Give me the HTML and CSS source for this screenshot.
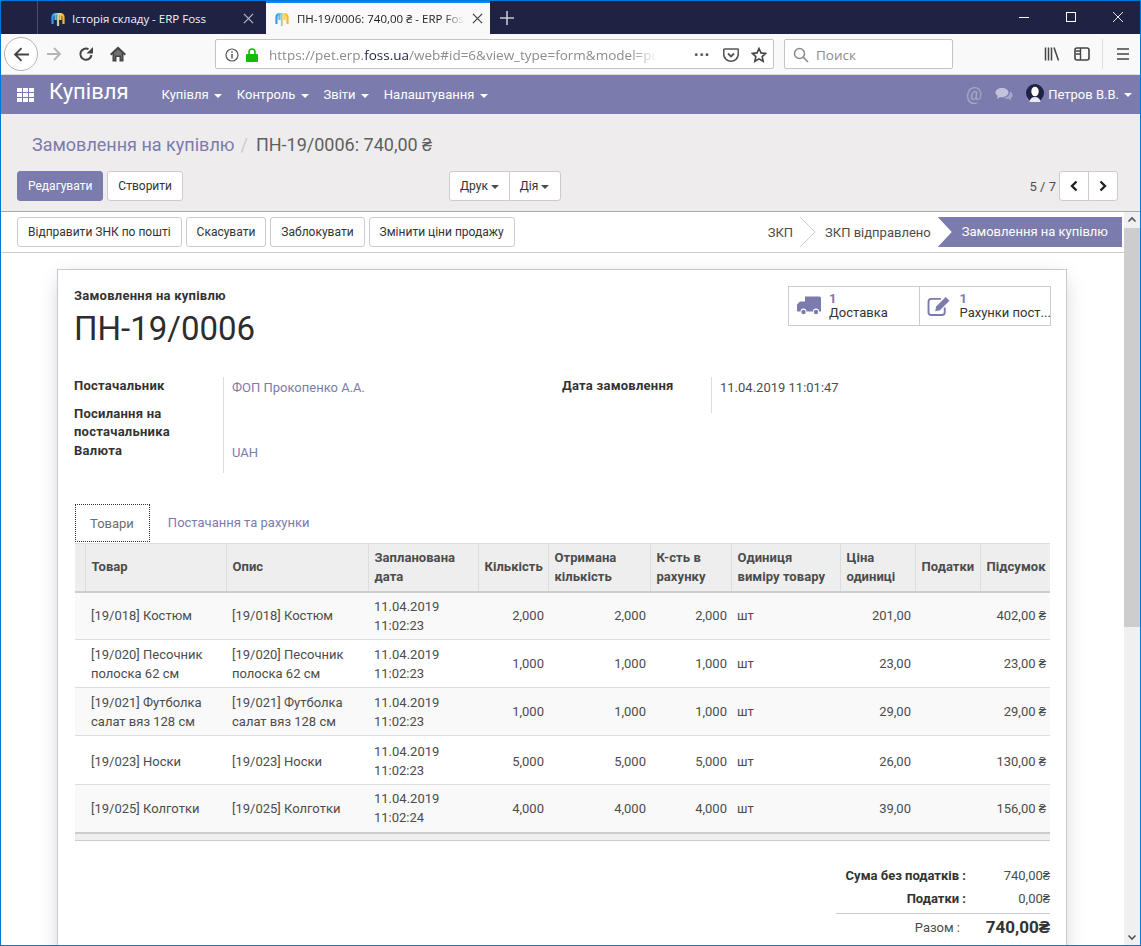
FILE: index.html
```html
<!DOCTYPE html>
<html lang="uk">
<head>
<meta charset="utf-8">
<title>ПН-19/0006: 740,00 ₴ - ERP Foss</title>
<link rel="stylesheet" href="styles.css">
</head>
<body>
<svg class="defs" width="0" height="0"><defs><linearGradient id="fav" x1="0" x2="1" y1="0" y2="0"><stop offset="0" stop-color="#2f9cf0"/><stop offset=".45" stop-color="#7fd0e8"/><stop offset=".6" stop-color="#f7e05a"/><stop offset="1" stop-color="#f5b52e"/></linearGradient></defs></svg>
<div class="window">
  <div class="tabbar">
    <div class="tab">
      <svg class="favicon" viewBox="0 0 16 16"><path d="M2.500 13V6.500Q2.500 3 5.500 3H10.500Q13.500 3 13.500 6.500V13M8 4V15M5.500 4V9M10.500 4V9" fill="none" stroke="url(#fav)" stroke-width="2.200"/></svg>
      <span class="tab-title">Історія складу - ERP Foss</span>
      <svg class="tab-close" viewBox="0 0 12 12"><path d="M1 1l10 10M11 1L1 11" stroke="#b4b6c2" stroke-width="1.400"/></svg>
    </div>
    <div class="tab tab-active">
      <svg class="favicon" viewBox="0 0 16 16"><path d="M2.500 13V6.500Q2.500 3 5.500 3H10.500Q13.500 3 13.500 6.500V13M8 4V15M5.500 4V9M10.500 4V9" fill="none" stroke="url(#fav)" stroke-width="2.200"/></svg>
      <span class="tab-title tab-title-fade">ПН-19/0006: 740,00 ₴ - ERP Fos</span>
      <svg class="tab-close" viewBox="0 0 12 12"><path d="M1 1l10 10M11 1L1 11" stroke="#444" stroke-width="1.400"/></svg>
    </div>
    <svg class="newtab" viewBox="0 0 14 14"><path d="M7 0v14M0 7h14" stroke="#c8c9d2" stroke-width="1.600"/></svg>
    <div class="winctrls">
      <svg viewBox="0 0 12 12"><path d="M1 6.500h10" stroke="#fff"/></svg>
      <svg viewBox="0 0 12 12"><rect x="1.500" y="1.500" width="9" height="9" fill="none" stroke="#fff"/></svg>
      <svg viewBox="0 0 12 12"><path d="M1 1l10 10M11 1L1 11" stroke="#fff" stroke-width=".9"/></svg>
    </div>
  </div>

  <div class="toolbar">
    <div class="backbtn"><svg viewBox="0 0 16 16"><path d="M15 8H2M8 2L2 8l6 6" fill="none" stroke="#444" stroke-width="1.800"/></svg></div>
    <svg class="tool fwd" viewBox="0 0 16 16"><path d="M1 8h13M8 2l6 6-6 6" fill="none" stroke="#b5b5b5" stroke-width="1.800"/></svg>
    <svg class="tool reload" viewBox="0 0 16 16"><path d="M13.500 9A5.600 5.600 0 1 1 10.500 3.200" fill="none" stroke="#444" stroke-width="2"/><path d="M15 1v6.500H8.500z" fill="#444"/></svg>
    <svg class="tool home" viewBox="0 0 16 16"><path d="M8 .5L0 8l1.300 1.400L2.500 8.300V15.500h4v-4.500h3v4.500h4V8.300l1.200 1.100L16 8z" fill="#444"/><path d="M8 3.200L4.200 6.800v7h.8v-4.300h6v4.300h.8v-7z" fill="#f9f9fa" opacity=".25"/></svg>
    <div class="urlbar">
      <svg class="url-info" viewBox="0 0 14 14"><circle cx="7" cy="7" r="6" fill="none" stroke="#555" stroke-width="1.200"/><path d="M7 6v4.500M7 3.200v1.500" stroke="#555" stroke-width="1.500"/></svg>
      <svg class="url-lock" viewBox="0 0 12 14"><path d="M3 6V4a3 3 0 0 1 6 0v2" fill="none" stroke="#12bc00" stroke-width="1.600"/><rect y="6" width="12" height="8" rx="1" fill="#12bc00"/></svg>
      <span class="url-text">https://pet.erp.<b>foss.ua</b>/web#id=6&amp;view_type=form&amp;model=pur</span>
      <span class="url-dots">•••</span>
      <svg class="url-ico url-pocket" viewBox="0 0 16 16"><path d="M1.500 2h13a.8.8 0 0 1 .8.8V7a7.300 7.300 0 0 1-14.600 0V2.800A.8.8 0 0 1 1.500 2z" fill="none" stroke="#555" stroke-width="1.600"/><path d="M5 6.500l3 3 3-3" fill="none" stroke="#555" stroke-width="1.800"/></svg>
      <svg class="url-ico url-star" viewBox="0 0 16 16"><path d="M8 1.500l2 4.400 4.700.5-3.500 3.200 1 4.700L8 11.900l-4.200 2.400 1-4.700L1.300 6.400 6 5.900z" fill="none" stroke="#444" stroke-width="1.600"/></svg>
    </div>
    <div class="searchbar">
      <svg viewBox="0 0 16 16"><circle cx="6.500" cy="6.500" r="5" fill="none" stroke="#8a8a8a" stroke-width="1.500"/><path d="M10 10l5 5" stroke="#8a8a8a" stroke-width="1.600"/></svg>
      <span>Поиск</span>
    </div>
    <div class="tools-right">
      <svg class="tool" viewBox="0 0 16 16"><path d="M1.500 1.500v13M4.500 1.500v13M7.500 1.500v13M10 1.500l4.500 13" fill="none" stroke="#444" stroke-width="1.500"/></svg>
      <svg class="tool" viewBox="0 0 16 16"><rect x="1" y="2" width="14" height="12" rx="2" fill="none" stroke="#444" stroke-width="1.600"/><path d="M6.500 2v12M2 5h4M2 8h4" stroke="#444" stroke-width="1.400"/></svg>
      <span class="tool-sep"></span>
      <svg class="tool" viewBox="0 0 16 16"><path d="M2 3h12M2 8h12M2 13h12" stroke="#444" stroke-width="1.700"/></svg>
    </div>
  </div>

  <nav class="navbar">
    <svg class="apps" viewBox="0 0 17 14"><g fill="#fff"><rect width="5" height="4"/><rect x="6" width="5" height="4"/><rect x="12" width="5" height="4"/><rect y="5" width="5" height="4"/><rect x="6" y="5" width="5" height="4"/><rect x="12" y="5" width="5" height="4"/><rect y="10" width="5" height="4"/><rect x="6" y="10" width="5" height="4"/><rect x="12" y="10" width="5" height="4"/></g></svg>
    <span class="brand">Купівля</span>
    <ul class="menu">
      <li>Купівля <i class="caret"></i></li>
      <li>Контроль <i class="caret"></i></li>
      <li>Звіти <i class="caret"></i></li>
      <li>Налаштування <i class="caret"></i></li>
    </ul>
    <div class="nav-right">
      <span class="nav-at">@</span>
      <svg class="nav-chat" viewBox="0 0 18 15"><path d="M7 1c3.600 0 6.500 2 6.500 4.600S10.600 10.200 7 10.200c-.7 0-1.300-.1-2-.2L2 12l.7-3C1.300 8.100.5 7 .5 5.600.5 3 3.400 1 7 1z" fill="#c3c2dc"/><path d="M15 4.500c1.600.8 2.600 2 2.600 3.500 0 1.200-.7 2.300-1.900 3l.5 2.600-2.800-1.800c-1.900.2-3.700-.3-4.900-1.200 3.600 0 6.800-2.400 6.500-6.100z" fill="#a9a8cb"/></svg>
      <svg class="nav-avatar" viewBox="0 0 18 18"><circle cx="9" cy="9" r="9" fill="#1e2343"/><ellipse cx="9" cy="7.500" rx="3.700" ry="4.800" fill="#fff"/><path d="M3.500 18c.5-3.500 2.500-5 5.500-5s5 1.500 5.500 5z" fill="#e8e8ee"/></svg>
      <span class="nav-user">Петров В.В.</span>
      <i class="caret"></i>
    </div>
  </nav>

  <section class="cpanel">
    <div class="breadcrumb">
      <a>Замовлення на купівлю</a><span class="bc-sep">/</span><span class="bc-cur">ПН-19/0006: 740,00 ₴</span>
    </div>
    <div class="cp-row">
      <div class="cp-left">
        <button class="btn btn-primary">Редагувати</button>
        <button class="btn">Створити</button>
      </div>
      <div class="btn-group cp-mid">
        <button class="btn">Друк <i class="caret caret-dark"></i></button>
        <button class="btn">Дія <i class="caret caret-dark"></i></button>
      </div>
      <div class="cp-right">
        <span class="pager">5 / 7</span>
        <div class="btn-group">
          <button class="btn btn-pg"><svg viewBox="0 0 10 12"><path d="M7.500 1.500L3 6l4.500 4.500" fill="none" stroke="#222" stroke-width="2.400"/></svg></button>
          <button class="btn btn-pg"><svg viewBox="0 0 10 12"><path d="M2.500 1.500L7 6l-4.500 4.500" fill="none" stroke="#222" stroke-width="2.400"/></svg></button>
        </div>
      </div>
    </div>
  </section>

  <div class="content">
    <main class="main">
      <div class="statusbar">
        <div class="st-buttons">
          <button class="btn">Відправити ЗНК по пошті</button>
          <button class="btn">Скасувати</button>
          <button class="btn">Заблокувати</button>
          <button class="btn">Змінити ціни продажу</button>
        </div>
        <div class="st-steps">
          <span class="step">ЗКП</span>
          <svg class="step-chev" viewBox="0 0 15 30"><path d="M0 0l15 15L0 30" fill="none" stroke="#ccc"/></svg>
          <span class="step step-2">ЗКП відправлено</span>
          <span class="step step-active">Замовлення на купівлю</span>
        </div>
      </div>

      <div class="sheet">
        <div class="sheet-head">
          <div>
            <div class="doc-label">Замовлення на купівлю</div>
            <h1 class="doc-title">ПН-19/0006</h1>
          </div>
          <div class="statbox">
            <div class="stat">
              <svg class="stat-ico" viewBox="0 0 24 19"><path d="M8 0h14.500a1.500 1.500 0 0 1 1.500 1.500V15h-2a3 3 0 0 0-6 0H9.500a3 3 0 0 0-6 0H1a1 1 0 0 1-1-1V8l3-3h5z" fill="#7c7bad"/><circle cx="6.500" cy="15.500" r="2.200" fill="#7c7bad"/><circle cx="19" cy="15.500" r="2.200" fill="#7c7bad"/></svg>
              <div><b>1</b><span>Доставка</span></div>
            </div>
            <div class="stat">
              <svg class="stat-ico" viewBox="0 0 24 21"><path d="M18 12v5a3 3 0 0 1-3 3H4a3 3 0 0 1-3-3V6a3 3 0 0 1 3-3h10" fill="none" stroke="#7c7bad" stroke-width="2"/><path d="M19 1l4 4-10 10-5 1 1-5z" fill="#7c7bad"/></svg>
              <div><b>1</b><span>Рахунки пост...</span></div>
            </div>
          </div>
        </div>

        <div class="groups">
          <div class="group group-left">
            <div class="g-label g-r1">Постачальник</div>
            <div class="g-value g-r1"><a>ФОП Прокопенко А.А.</a></div>
            <div class="g-label g-r2">Посилання на постачальника</div>
            <div class="g-value g-r2"></div>
            <div class="g-label g-r3">Валюта</div>
            <div class="g-value g-r3"><a>UAH</a></div>
          </div>
          <div class="group group-right">
            <div class="g-label g-r4">Дата замовлення</div>
            <div class="g-value g-r4">11.04.2019 11:01:47</div>
          </div>
        </div>

        <div class="nb-tabs">
          <span class="nb-tab nb-active">Товари</span>
          <span class="nb-tab">Постачання та рахунки</span>
        </div>

        <table class="lines">
          <colgroup>
            <col class="c0"><col class="c1"><col class="c2"><col class="c3"><col class="c4"><col class="c5"><col class="c6"><col class="c7"><col class="c8"><col class="c9"><col class="c10">
          </colgroup>
          <thead>
            <tr><th></th><th>Товар</th><th>Опис</th><th>Запланована дата</th><th>Кількість</th><th>Отримана кількість</th><th>К-сть в рахунку</th><th>Одиниця виміру товару</th><th>Ціна одиниці</th><th>Податки</th><th>Підсумок</th></tr>
          </thead>
          <tbody>
            <tr><td></td><td>[19/018] Костюм</td><td>[19/018] Костюм</td><td>11.04.2019 11:02:23</td><td class="num">2,000</td><td class="num">2,000</td><td class="num">2,000</td><td>шт</td><td class="num">201,00</td><td></td><td class="num">402,00 ₴</td></tr>
            <tr><td></td><td>[19/020] Песочник полоска 62 см</td><td>[19/020] Песочник полоска 62 см</td><td>11.04.2019 11:02:23</td><td class="num">1,000</td><td class="num">1,000</td><td class="num">1,000</td><td>шт</td><td class="num">23,00</td><td></td><td class="num">23,00 ₴</td></tr>
            <tr><td></td><td>[19/021] Футболка салат вяз 128 см</td><td>[19/021] Футболка салат вяз 128 см</td><td>11.04.2019 11:02:23</td><td class="num">1,000</td><td class="num">1,000</td><td class="num">1,000</td><td>шт</td><td class="num">29,00</td><td></td><td class="num">29,00 ₴</td></tr>
            <tr class="row-tall"><td></td><td>[19/023] Носки</td><td>[19/023] Носки</td><td>11.04.2019 11:02:23</td><td class="num">5,000</td><td class="num">5,000</td><td class="num">5,000</td><td>шт</td><td class="num">26,00</td><td></td><td class="num">130,00 ₴</td></tr>
            <tr><td></td><td>[19/025] Колготки</td><td>[19/025] Колготки</td><td>11.04.2019 11:02:24</td><td class="num">4,000</td><td class="num">4,000</td><td class="num">4,000</td><td>шт</td><td class="num">39,00</td><td></td><td class="num">156,00 ₴</td></tr>
          </tbody>
          <tfoot>
            <tr><td colspan="11"></td></tr>
          </tfoot>
        </table>

        <div class="totals">
          <div class="t-label">Сума без податків :</div><div class="t-value">740,00₴</div>
          <div class="t-label">Податки :</div><div class="t-value">0,00₴</div>
          <div class="t-label t-grand">Разом :</div><div class="t-value t-grand-val">740,00₴</div>
        </div>
      </div>
    </main>
    <div class="scrollbar">
      <svg class="sb-arrow" viewBox="0 0 16 16"><path d="M4.500 9.500L8 6l3.500 3.500" fill="none" stroke="#555" stroke-width="1.600"/></svg>
      <div class="sb-thumb"></div>
      <div class="sb-track"></div>
      <svg class="sb-arrow" viewBox="0 0 16 16"><path d="M4.500 6.500L8 10l3.500-3.500" fill="none" stroke="#555" stroke-width="1.600"/></svg>
    </div>
  </div>
</div>
</body>
</html>
```
FILE: styles.css
```css
* { box-sizing: border-box; }
html, body { margin: 0; padding: 0; height: 100%; overflow: hidden; }
body { font-family: Roboto, "Liberation Sans", sans-serif; font-size: 13px; color: #4c4c4c; background: #fff; }
svg { display: block; flex: none; }
.defs { position: absolute; }

.window { width: 1141px; height: 946px; border: 1px solid #0078d7; display: flex; flex-direction: column; overflow: hidden; }

/* browser tabs */
.tabbar { height: 33px; flex: none; background: #1e2343; display: flex; align-items: stretch; padding-left: 36px; font-family: "Open Sans", "Noto Sans", sans-serif; font-size: 11.500px; }
.tab { width: 229px; display: flex; align-items: center; padding: 2px 12px 0 12px; color: #f2f2f5; border-left: 1px solid #4a4e68; }
.tab-active { width: 224px; margin-left: 0; background: #f9f9fa; color: #222; border-left: 0; border-top: 2px solid #0a84ff; padding: 0 12px 0 8px; }
.favicon { width: 16px; height: 16px; }
.tab-title { margin-left: 6px; flex: 1; white-space: nowrap; }
.tab-active .tab-title { margin-left: 7px; }
.tab-title-fade { -webkit-mask-image: linear-gradient(to right, #000 88%, transparent 100%); mask-image: linear-gradient(to right, #000 88%, transparent 100%); }
.tab-close { width: 11px; height: 11px; margin-left: 8px; }
.newtab { width: 14px; height: 14px; margin: 10px 0 0 10px; }
.winctrls { margin-left: auto; display: flex; gap: 35px; padding: 10px 16px 0 0; }
.winctrls svg { width: 12px; height: 12px; }

/* browser toolbar */
.toolbar { height: 41px; flex: none; background: #f9f9fa; border-bottom: 1px solid #ddd; display: flex; align-items: center; padding-left: 3px; }
.backbtn { width: 34px; height: 34px; border: 1px solid #b5b5b5; border-radius: 50%; background: #fff; display: flex; align-items: center; justify-content: center; }
.backbtn svg { width: 17px; height: 17px; }
.tool { width: 16px; height: 16px; }
.fwd { margin-left: 8px; }
.reload { margin-left: 16px; }
.home { margin-left: 16px; }
.urlbar { width: 559px; height: 30px; margin-left: 89px; background: #fff; border: 1px solid #c4c4c4; border-radius: 2px; display: flex; align-items: center; padding: 1px 6px 0 9px; }
.url-info { width: 14px; height: 14px; }
.url-lock { width: 12px; height: 14px; margin-left: 7px; }
.url-text { margin-left: 11px; width: 389px; flex: none; white-space: nowrap; font-family: "Open Sans", "Noto Sans", sans-serif; font-size: 13.500px; color: #8c8c8c; -webkit-mask-image: linear-gradient(to right, #000 93%, transparent 100%); mask-image: linear-gradient(to right, #000 93%, transparent 100%); }
.url-text b { font-weight: 400; color: #1e2343; }
.url-dots { margin-left: 36px; font-size: 13px; letter-spacing: 1px; color: #555; width: 19px; }
.url-ico { width: 16px; height: 16px; }
.url-pocket { margin-left: 10px; }
.url-star { margin-left: 12px; }
.searchbar { width: 169px; height: 30px; margin-left: 10px; background: #fff; border: 1px solid #c4c4c4; border-radius: 2px; display: flex; align-items: center; gap: 7px; padding: 1px 0 0 8px; font-family: "Open Sans", "Noto Sans", sans-serif; font-size: 13.500px; color: #8a8a8a; }
.searchbar svg { width: 16px; height: 16px; }
.tools-right { display: flex; align-items: center; margin-left: 91px; gap: 14px; }
.tool-sep { width: 1px; height: 30px; background: #ddd; margin: 0 -2px; }

/* odoo navbar */
.navbar { height: 39px; flex: none; background: #7c7bad; color: #fff; display: flex; align-items: center; padding-left: 16px; }
.apps { width: 17px; height: 14px; }
.brand { font-size: 22px; margin-left: 15px; line-height: 24px; position: relative; top: -3px; }
.menu { list-style: none; margin: 0 0 0 33px; padding: 0; display: flex; gap: 15px; }
.menu li { white-space: nowrap; }
.caret { display: inline-block; width: 0; height: 0; margin-left: 2px; border-top: 4px solid #fff; border-left: 4px solid transparent; border-right: 4px solid transparent; vertical-align: middle; }
.caret-dark { border-top-color: #4c4c4c; margin-left: 0; }
.nav-right { margin-left: auto; display: flex; align-items: center; padding-right: 8px; }
.nav-at { font-size: 18px; color: #a9a8cb; position: relative; top: -1px; }
.nav-chat { width: 18px; height: 15px; margin-left: 13px; }
.nav-avatar { width: 18px; height: 18px; margin-left: 13px; position: relative; top: -2px; }
.nav-user { margin-left: 4px; margin-right: 3px; }

/* control panel */
.cpanel { height: 98px; flex: none; background: #eeeced; border-bottom: 1px solid #aaa; padding: 0 5px 0 16px; }
.breadcrumb { font-size: 18px; line-height: 24px; padding: 19px 0 0 15px; height: 57px; }
.breadcrumb a { color: #7c7bad; }
.bc-sep { color: #ccc; margin: 0 8px 0 6px; }
.bc-cur { color: #5f5f5f; }
.cp-row { display: flex; align-items: center; }
.cp-left { display: flex; gap: 4px; width: 432px; }
.cp-right { margin-left: auto; display: flex; align-items: center; gap: 3px; padding-right: 17px; }
.pager { color: #4c4c4c; }

.btn { height: 30px; padding: 0 10px; font: inherit; font-size: 12px; color: #333; background: #fff; border: 1px solid #ccc; border-radius: 3px; white-space: nowrap; }
.btn-primary { background: #7c7bad; border-color: #7c7bad; color: #fff; }
.btn-group { display: flex; }
.btn-group .btn:first-child { border-radius: 3px 0 0 3px; }
.btn-group .btn:last-child { border-radius: 0 3px 3px 0; margin-left: -1px; }
.cp-mid .btn:last-child { padding-right: 11px; }
.btn-pg { width: 30px; padding: 0; display: flex; align-items: center; justify-content: center; }
.btn-pg svg { width: 10px; height: 12px; }

/* content */
.content { flex: 1; min-height: 0; display: flex; }
.main { flex: 1; min-width: 0; background: #fff; overflow: hidden; }
.scrollbar { width: 16px; flex: none; display: flex; flex-direction: column; background: #f0f0f0; }
.sb-arrow { width: 16px; height: 16px; }
.sb-thumb { height: 399px; background: #cdcdcd; flex: none; }
.sb-track { flex: 1; }

/* statusbar */
.statusbar { height: 41px; border-bottom: 1px solid #ccc; display: flex; align-items: flex-start; justify-content: space-between; padding: 5px 2px 0 16px; }
.st-buttons { display: flex; gap: 4px; }
.st-steps { display: flex; align-items: center; height: 30px; font-size: 13px; }
.step { white-space: nowrap; }
.step-chev { width: 15px; height: 30px; margin-left: 7px; }
.step-2 { margin-left: 10px; }
.step-active { margin-left: 7px; background: #7c7bad; color: #fff; height: 30px; line-height: 30px; padding: 0 14px 0 24px; clip-path: polygon(0 0, 100% 0, 100% 100%, 0 100%, 14px 50%); }

/* sheet */
.sheet { width: 1010px; margin: 16px 0 0 56px; height: 720px; border: 1px solid #c8c8d3; box-shadow: 0 5px 20px -5px rgba(0,0,0,.25); padding: 16px 15px 0 16px; background: #fff; }
.sheet-head { display: flex; justify-content: space-between; align-items: flex-start; height: 91px; }
.doc-label { font-weight: 700; font-size: 13px; line-height: 18px; color: #333; padding-top: 1px; letter-spacing: .25px; }
.doc-title { font-size: 33px; font-weight: 400; line-height: 38px; margin: 5px 0 0; color: #2d2d2d; }
.statbox { display: flex; width: 263px; height: 40px; border: 1px solid #ccc; }
.stat { width: 130px; display: flex; align-items: center; padding-left: 8px; gap: 8px; overflow: hidden; }
.stat + .stat { border-left: 1px solid #ccc; padding-left: 7px; width: 132px; }
.stat + .stat .stat-ico { margin-right: 1px; }
.stat div { display: flex; flex-direction: column; line-height: 14px; white-space: nowrap; color: #333; }
.stat b { color: #7c7bad; font-size: 13px; }
.stat-ico { width: 24px; height: 20px; }

.groups { display: flex; }
.group { display: grid; grid-template-columns: 149px 1fr; align-items: stretch; }
.group-left { width: 488px; }
.group-right { flex: 1; grid-template-rows: 36px; align-self: flex-start; }
.g-label { font-weight: 700; line-height: 18px; color: #333; letter-spacing: .25px; }
.g-value { border-left: 1px solid #ddd; padding: 2px 0 0 8px; line-height: 18px; }
.g-value a { color: #7c7bad; }
.g-r1 { height: 28px; }
.g-r2 { height: 37px; }
.g-r3 { height: 31px; }
.g-r4 { height: 36px; }

.nb-tabs { display: flex; margin: 31px 0 0 1px; height: 39px; align-items: stretch; }
.nb-tab { padding: 0 19px 0 18px; line-height: 37px; color: #7c7bad; }
.nb-active { border: 1px dotted #333; color: #6d6d6d; padding: 0 15px 0 14px; height: 38px; }

.lines { width: 975px; margin-left: 1px; border-collapse: collapse; table-layout: fixed; }
.c0 { width: 10px; } .c1 { width: 141px; } .c2 { width: 142px; } .c3 { width: 110px; } .c4 { width: 70px; } .c5 { width: 102px; } .c6 { width: 81px; } .c7 { width: 109px; } .c8 { width: 75px; } .c9 { width: 65px; } .c10 { width: 70px; }
.lines th { height: 48px; background: #eee; text-align: left; font-weight: 700; line-height: 19px; padding: 0 4px 1px 6px; color: #4c4c4c; letter-spacing: .05px; border-top: 1px solid #ddd; border-left: 1px solid #ddd; border-bottom: 2px solid #ccc; }
.lines th:first-child { border-left: 0; padding: 0; }
.lines td { height: 48px; padding: 0 4px 0 6px; line-height: 19px; vertical-align: middle; border-top: 1px solid #ddd; }
.lines .row-tall td { padding-top: 2px; height: 49px; }
.lines tbody tr:nth-child(odd) td { background: #f9f9f9; }
.lines tbody tr:first-child td { border-top: 0; }
.lines .num { text-align: right; }
.lines tfoot td { height: 8px; padding: 0; background: #eee; border-top: 2px solid #ccc; border-bottom: 1px solid #ccc; }

.totals { width: 214px; margin: 23px 0 0 auto; display: grid; grid-template-columns: 130px 84px; grid-auto-rows: 23px; align-items: center; color: #333; position: relative; left: -1px; }
.t-label { text-align: right; font-weight: 700; }
.t-value { text-align: right; color: #4c4c4c; }
.t-grand { font-weight: 400; padding-right: 6px; color: #4c4c4c; border-top: 1px solid #ccc; height: 28px; line-height: 28px; margin-top: 3px; align-self: start; }
.t-grand-val { font-weight: 700; font-size: 17px; color: #333; border-top: 1px solid #ccc; height: 28px; line-height: 26px; margin-top: 3px; align-self: start; }
```
